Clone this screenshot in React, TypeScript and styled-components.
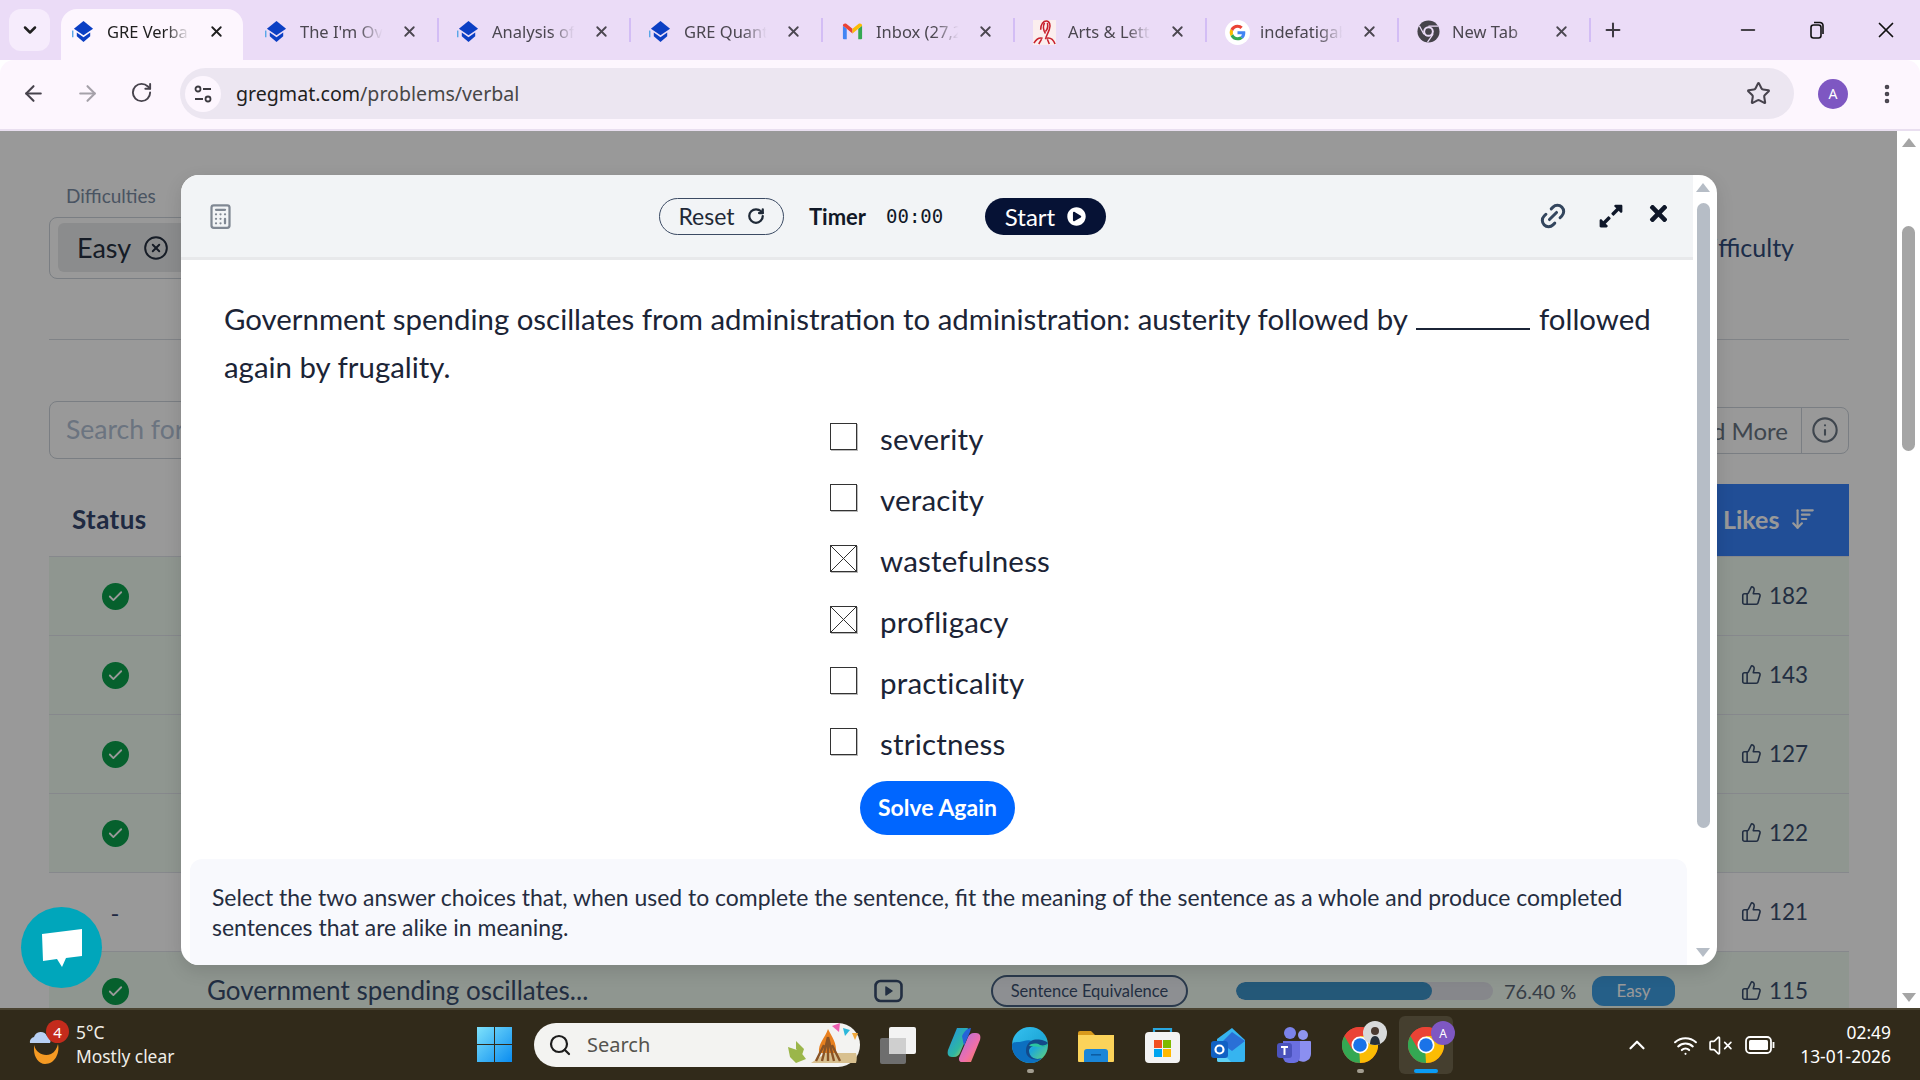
import styled, { createGlobalStyle } from 'styled-components'
import { ReactNode } from 'react'
import {
    ArrowDownWideNarrow, ArrowLeft, ArrowRight, Calculator, Check, ChevronDown, ChevronUp, CircleX, EllipsisVertical,
    Info, Link2, Minus, Plus, RotateCw, Search, Star, ThumbsUp, VolumeX, Wifi, X,
} from 'lucide-react'
import { FaExpandAlt, FaPlayCircle, FaTimes } from 'react-icons/fa'

const UI_FONT = `"Lato", "Noto Sans", sans-serif`
const CHROME_FONT = `"Noto Sans", "Open Sans", sans-serif`

const GlobalStyle = createGlobalStyle`
    html, body { margin: 0; padding: 0; height: 1080px; overflow: hidden; background: #fff; }
    * { box-sizing: border-box; }
    svg { display: block; flex-shrink: 0; }
`

const Screen = styled.div`
    width: 1920px;
    height: 1080px;
    display: flex;
    flex-direction: column;
    overflow: hidden;
    font-family: ${UI_FONT};
`

/* browser chrome */
const TabStrip = styled.div`
    height: 60px;
    flex-shrink: 0;
    background: #ebdcf7;
    display: flex;
    align-items: flex-end;
    padding-left: 9px;
    font-family: ${CHROME_FONT};
`

const TabMenu = styled.div`
    width: 41px;
    height: 42px;
    margin: 0 5px 9px 0;
    border-radius: 12px;
    background: #f6ecfc;
    color: #1f1f1f;
    display: flex;
    align-items: center;
    justify-content: center;
`

const TabItem = styled.div<{ $active?: boolean; $sep?: boolean }>`
    position: relative;
    height: 51px;
    flex-shrink: 0;
    display: flex;
    align-items: center;
    padding-bottom: 7px;
    width: ${p => (p.$active ? '182px' : '192px')};
    margin: ${p => (p.$active ? '0 4px 0 6px' : '0')};
    padding-left: ${p => (p.$active ? '11px' : '18px')};
    background: ${p => (p.$active ? '#fdf6fe' : 'transparent')};
    border-radius: ${p => (p.$active ? '16px 16px 0 0' : '0')};
    color: ${p => (p.$active ? '#1f1f1f' : '#4b4750')};

    &::after {
        content: '';
        display: ${p => (p.$sep ? 'block' : 'none')};
        position: absolute;
        right: 0;
        top: 9px;
        height: 24px;
        width: 2px;
        background: #d3bdf5;
    }
`

const TabIcon = styled.div`
    width: 23px;
    height: 23px;
    flex-shrink: 0;
`

const TabTitle = styled.div`
    width: 86px;
    margin: 0 15px 0 12px;
    font-size: 16.5px;
    white-space: nowrap;
    overflow: hidden;
    -webkit-mask-image: linear-gradient(90deg, #000 68%, transparent 96%);
    mask-image: linear-gradient(90deg, #000 68%, transparent 96%);
`

const NewTab = styled.div`
    margin: 0 0 9px 11px;
    height: 42px;
    color: #3d3a42;
    display: flex;
    align-items: center;
`

const WindowControls = styled.div`
    margin-left: auto;
    height: 60px;
    display: flex;
    align-items: center;
    color: #111;
`

const WindowButton = styled.div`
    width: 69px;
    display: flex;
    justify-content: center;
`

const ToolBar = styled.div`
    height: 71px;
    flex-shrink: 0;
    background: #fdf6fe;
    border-bottom: 2px solid #e9dff0;
    border-radius: 14px 14px 0 0;
    display: flex;
    align-items: center;
    padding-bottom: 2px;
`

const NavButton = styled.div<{ $off?: boolean }>`
    width: 54px;
    display: flex;
    justify-content: center;
    color: ${p => (p.$off ? '#a5a1a9' : '#47434d')};
`

const NavGroup = styled.div`
    width: 180px;
    padding-left: 6px;
    display: flex;
`

const AddressBar = styled.div`
    width: 1614px;
    height: 51px;
    border-radius: 26px;
    background: #ece6f1;
    display: flex;
    align-items: center;
    padding: 0 23px 0 5px;
    font-family: ${CHROME_FONT};
    font-size: 19.6px;
`

const SiteInfo = styled.div`
    width: 36px;
    height: 36px;
    border-radius: 50%;
    background: #fdf6fe;
    display: flex;
    align-items: center;
    justify-content: center;
    margin-right: 15px;
`

const Host = styled.span`
    color: #1f1f1f;
`

const UrlPath = styled.span`
    color: #474747;
`

const Bookmark = styled.div`
    margin-left: auto;
    color: #47434d;
`

const Avatar = styled.div`
    width: 30px;
    height: 30px;
    margin-left: 24px;
    border-radius: 50%;
    background: #7e57c2;
    color: #fff;
    font-size: 14px;
    font-family: ${CHROME_FONT};
    display: flex;
    align-items: center;
    justify-content: center;
`

const Kebab = styled.div`
    margin-left: 27px;
    color: #47434d;
`

/* page behind the dialog */
const Viewport = styled.div`
    height: 877px;
    flex-shrink: 0;
    position: relative;
    display: flex;
    overflow: hidden;
`

const Page = styled.div`
    width: 1897px;
    flex-shrink: 0;
    padding: 53px 48px 0 49px;
    background: #fff;
    position: relative;
`

const Overlay = styled.div`
    position: absolute;
    inset: 0 23px 0 0;
    background: rgba(0, 0, 0, 0.4);
    z-index: 1;
`

const FilterLabel = styled.div`
    margin-left: 17px;
    height: 24px;
    line-height: 24px;
    font-size: 19px;
    color: #7b8ca3;
`

const FilterRow = styled.div`
    margin-top: 9px;
    display: flex;
    align-items: center;
    justify-content: space-between;
`

const FilterBox = styled.div`
    width: 400px;
    height: 62px;
    border: 1px solid #cbd2da;
    border-radius: 8px;
    padding: 5px 8px;
`

const Chip = styled.div`
    width: 150px;
    height: 49px;
    border-radius: 6px;
    background: #e8e9eb;
    display: flex;
    align-items: center;
    gap: 12px;
    padding-left: 19px;
    font-size: 27px;
    color: #253040;
`

const SortLabel = styled.div`
    margin: 0 55px 2px 0;
    font-size: 25px;
    color: #304b7b;
`

const Divider = styled.div`
    margin-top: 60px;
    height: 1px;
    background: #d5dae2;
`

const SearchRow = styled.div`
    margin-top: 61px;
    height: 58px;
    display: flex;
    align-items: center;
    justify-content: space-between;
`

const SearchInput = styled.div`
    width: 800px;
    height: 58px;
    border: 1px solid #cbd2da;
    border-radius: 8px;
    display: flex;
    align-items: center;
    padding: 0 0 2px 16px;
    font-size: 26.5px;
    color: #b2c1d5;
`

const ReadMore = styled.div`
    width: 250px;
    height: 47px;
    border: 1px solid #cbd2da;
    border-radius: 8px;
    display: flex;
    align-items: center;
    justify-content: flex-end;
    padding-bottom: 0;
    font-size: 24px;
    color: #697583;
`

const ReadMoreInfo = styled.div`
    width: 47px;
    height: 100%;
    margin-left: 13px;
    border-left: 1px solid #cbd2da;
    display: flex;
    align-items: center;
    justify-content: center;
`

const TableHead = styled.div`
    margin-top: 25px;
    height: 72px;
    display: grid;
    grid-template-columns: 134px 660px 90px 303px 346px 103px 164px;
    align-items: stretch;
`

const HeadStatus = styled.div`
    padding: 0 0 3px 23px;
    display: flex;
    align-items: center;
    font-size: 26px;
    letter-spacing: 0.4px;
    font-weight: 700;
    color: #34466f;
`

const HeadLikes = styled.div`
    grid-column: 7;
    background: #3782fa;
    color: #fff;
    display: flex;
    align-items: center;
    gap: 11px;
    padding: 0 0 3px 38px;
    font-size: 25px;
    font-weight: 700;
`

const TableRow = styled.div<{ $solved: boolean }>`
    height: 79px;
    display: grid;
    grid-template-columns: 134px 660px 90px 303px 346px 103px 164px;
    align-items: center;
    border-top: 1px solid #dfe3ea;
    background: ${p => (p.$solved ? '#eefaf0' : '#fff')};
`

const StatusCell = styled.div`
    display: flex;
    justify-content: center;
    padding-right: 2px;
    font-size: 24px;
    color: #34466f;
`

const SolvedMark = styled.div`
    width: 27px;
    height: 27px;
    border-radius: 50%;
    background: #0aa04c;
    color: #fff;
    display: flex;
    align-items: center;
    justify-content: center;
`

const TitleCell = styled.div`
    padding: 0 0 2px 24px;
    font-size: 26px;
    color: #3a4e6e;
    white-space: nowrap;
`

const VideoCell = styled.div`
    display: flex;
    justify-content: center;
`

const TypePill = styled.div`
    margin-left: 58px;
    width: 197px;
    height: 32px;
    border-radius: 16px;
    border: 2px solid #46607f;
    background: #ebeef3;
    display: flex;
    align-items: center;
    justify-content: center;
    font-size: 16.5px;
    color: #3a4e6e;
`

const RateCell = styled.div`
    display: flex;
    align-items: center;
    gap: 11px;
    font-size: 20px;
    color: #5b6775;
    white-space: nowrap;
`

const RateTrack = styled.div`
    width: 257px;
    height: 18px;
    border-radius: 9px;
    background: #e0e1e8;
    overflow: hidden;
`

const RateFill = styled.div`
    height: 100%;
    background: #3c93c8;
    border-radius: 9px;
`

const LevelPill = styled.div`
    width: 83px;
    height: 30px;
    margin-left: 10px;
    padding-bottom: 2px;
    border-radius: 12px;
    background: #3f9ee3;
    color: #fff;
    font-size: 17px;
    display: flex;
    align-items: center;
    justify-content: center;
`

const LikesCell = styled.div`
    padding: 0 0 2px 56px;
    display: flex;
    align-items: center;
    gap: 7px;
    font-size: 22.5px;
    color: #3a4e6e;
`

const PageScroll = styled.div`
    width: 23px;
    flex-shrink: 0;
    background: #fff;
    display: flex;
    flex-direction: column;
    align-items: center;
    padding: 7px 0 6px;
`

const ScrollArrow = styled.div<{ $down?: boolean; $color: string }>`
    width: 0;
    height: 0;
    border-left: 7px solid transparent;
    border-right: 7px solid transparent;
    border-bottom: ${p => (p.$down ? '0' : `9px solid ${p.$color}`)};
    border-top: ${p => (p.$down ? `9px solid ${p.$color}` : '0')};
    margin-top: ${p => (p.$down ? 'auto' : '0')};
`

const PageThumb = styled.div`
    width: 13px;
    height: 225px;
    margin-top: 79px;
    border-radius: 7px;
    background: #a5a5a5;
`

const ChatButton = styled.div`
    position: absolute;
    left: 21px;
    top: 776px;
    width: 81px;
    height: 81px;
    border-radius: 50%;
    background: #00a6bb;
    z-index: 2;
    display: flex;
    align-items: center;
    justify-content: center;
`

/* dialog */
const Modal = styled.div`
    position: absolute;
    left: 181px;
    top: 44px;
    width: 1536px;
    height: 790px;
    border-radius: 18px;
    background: #fff;
    overflow: hidden;
    z-index: 2;
    display: flex;
    box-shadow: 0 6px 18px rgba(0, 0, 0, 0.12);
`

const ModalMain = styled.div`
    width: 1512px;
    display: flex;
    flex-direction: column;
`

const ModalHeader = styled.div`
    height: 85px;
    flex-shrink: 0;
    background: #f2f4f6;
    border-bottom: 3px solid #e8e9eb;
    display: grid;
    grid-template-columns: 478px 125px 25px 58px 19px 57px 42px 121px 418px 58px 58px 36px 1fr;
    align-items: center;
    color: #111827;
`

const CalcIcon = styled.div`
    padding-left: 26px;
    color: #808893;
`

const ResetButton = styled.div`
    height: 37px;
    border-radius: 19px;
    border: 1px solid #3b4a63;
    display: flex;
    align-items: center;
    justify-content: center;
    gap: 12px;
    font-size: 23px;
    color: #1f2937;
`

const TimerLabel = styled.div`
    font-size: 22px;
    font-weight: 700;
    color: #111827;
`

const TimerValue = styled.div`
    font-family: "DejaVu Sans Mono", monospace;
    font-size: 19px;
    color: #111827;
`

const StartButton = styled.div`
    height: 37px;
    border-radius: 19px;
    background: #061235;
    color: #fff;
    display: flex;
    align-items: center;
    justify-content: center;
    gap: 12px;
    font-size: 24px;
`

const HeaderIcon = styled.div<{ $color?: string; $lift?: number }>`
    display: flex;
    justify-content: center;
    margin-bottom: ${p => p.$lift || 0}px;
    color: ${p => p.$color || '#0f1729'};
`

const LinkIcon = styled(Link2)`
    transform: rotate(-45deg);
`

const ModalBody = styled.div`
    flex: 1;
    display: flex;
    flex-direction: column;
    padding-top: 35px;
`

const Question = styled.div`
    padding: 0 30px 0 43px;
    font-size: 29.4px;
    line-height: 47.5px;
    color: #1b2436;
`

const Blank = styled.span`
    display: inline-block;
    width: 114px;
    height: 24px;
    border-bottom: 2px solid #1b2436;
    margin: 0 9px 0 8px;
    vertical-align: baseline;
`

const Choices = styled.div`
    margin: 22px 0 0 649px;
    display: flex;
    flex-direction: column;
`

const Choice = styled.div`
    height: 61px;
    display: flex;
    align-items: flex-start;
    font-size: 29.5px;
    line-height: 54px;
    letter-spacing: 0.2px;
    color: #1b2436;
`

const CheckBox = styled.div`
    width: 27px;
    height: 27px;
    margin: 11px 23px 0 0;
    border: 1px solid #333;
    box-shadow: 1px 1px 0 #bbb;
    display: flex;
`

const SolveButton = styled.div`
    width: 155px;
    height: 54px;
    margin: 3px 0 0 679px;
    padding-bottom: 2px;
    border-radius: 27px;
    background: #0066ff;
    color: #fff;
    font-size: 23px;
    font-weight: 700;
    display: flex;
    align-items: center;
    justify-content: center;
`

const Instructions = styled.div`
    height: 106px;
    margin: auto 6px 0 9px;
    border-radius: 12px 12px 0 0;
    background: #f8f9fd;
    padding: 23px 20px 0 22px;
    font-size: 22.95px;
    line-height: 30px;
    color: #252d40;
`

const ModalScroll = styled.div`
    width: 24px;
    flex-shrink: 0;
    display: flex;
    flex-direction: column;
    align-items: center;
    padding: 8px 4px 8px 0;
`

const ModalThumb = styled.div`
    width: 13px;
    height: 625px;
    margin-top: 11px;
    border-radius: 7px;
    background: #b6bdc6;
`

/* taskbar */
const TaskBar = styled.div`
    height: 72px;
    flex-shrink: 0;
    background: #312a1a;
    border-top: 2px solid #4a4331;
    display: flex;
    align-items: center;
    color: #fff;
    font-family: ${CHROME_FONT};
`

const Weather = styled.div`
    width: 461px;
    flex-shrink: 0;
    padding-left: 29px;
    display: flex;
    align-items: center;
    gap: 13px;
`

const WeatherIcon = styled.div`
    position: relative;
    width: 34px;
    height: 44px;
`

const WeatherBadge = styled.div`
    position: absolute;
    left: 17px;
    top: -3px;
    width: 23px;
    height: 23px;
    border-radius: 50%;
    background: #c42b1c;
    font-size: 15px;
    display: flex;
    align-items: center;
    justify-content: center;
`

const WeatherText = styled.div`
    padding-bottom: 3px;
    font-size: 17.4px;
    line-height: 24px;
    color: #f0eee8;
`

const AppCell = styled.div<{ $active?: boolean }>`
    position: relative;
    width: ${p => (p.$active ? '54px' : '66px')};
    margin: ${p => (p.$active ? '0 6px' : '0')};
    height: 58px;
    padding-top: 11px;
    flex-shrink: 0;
    border-radius: 6px;
    background: ${p => (p.$active ? '#453f2f' : 'transparent')};
    display: flex;
    flex-direction: column;
    align-items: center;
    gap: 6px;
`

const RunDot = styled.div<{ $active?: boolean }>`
    width: ${p => (p.$active ? '24px' : '7px')};
    height: 4px;
    border-radius: 2px;
    background: ${p => (p.$active ? '#0a9cf5' : '#a29d90')};
`

const SearchPill = styled.div`
    width: 326px;
    height: 44px;
    margin: 0 5px 0 7px;
    border-radius: 22px;
    background: #f3f3f1;
    color: #55534e;
    display: flex;
    align-items: center;
    padding: 0 2px 0 14px;
    font-size: 20px;
    flex-shrink: 0;
`

const SearchPillText = styled.div`
    margin: 0 0 2px 15px;
`

const SearchArt = styled.div`
    margin-left: auto;
`

const Tray = styled.div`
    margin-left: auto;
    display: flex;
    align-items: center;
    padding-right: 29px;
`

const TrayIcon = styled.div<{ $w: number }>`
    width: ${p => p.$w}px;
    display: flex;
    justify-content: center;
`

const Clock = styled.div`
    margin-left: 15px;
    padding-bottom: 3px;
    text-align: right;
    font-size: 17.4px;
    line-height: 24px;
`

const AvatarBadge = styled.div`
    position: absolute;
    left: 32px;
    top: 5px;
    width: 24px;
    height: 24px;
    border-radius: 50%;
    background: #7e57c2;
    font-size: 12px;
    display: flex;
    align-items: center;
    justify-content: center;
`

const PhotoBadge = styled(AvatarBadge)`
    left: 36px;
    background: #d8dadb;
    overflow: hidden;
`

/* drawings */
const GregIcon = () => (
    <svg width="23" height="23" viewBox="0 0 24 24">
        <polygon points="12,1 22,9 12,16 2,9" fill="#0b3fc4" />
        <polygon points="5,13 12,18 19,13 19,17 12,23 5,17" fill="#0b3fc4" />
        <rect x="0" y="11" width="1.5" height="7" fill="#5aa7e8" />
    </svg>
)

const GmailIcon = () => (
    <svg width="23" height="23" viewBox="0 0 24 24">
        <path d="M2 20V6l4 3v11H3a1 1 0 0 1-1-1z" fill="#4285f4" />
        <path d="M22 20V6l-4 3v11h3a1 1 0 0 0 1-1z" fill="#34a853" />
        <path d="M6 9 2 6c0-2 2-3 3.500-2L12 9v5z" fill="#ea4335" />
        <path d="M18 9l4-3c0-2-2-3-3.500-2L12 9v5z" fill="#fbbc04" />
    </svg>
)

const ArtsIcon = () => (
    <svg width="23" height="25" viewBox="0 0 24 26" fill="none" stroke="#c8202c" strokeWidth="1.6">
        <rect width="24" height="26" fill="#fbeeee" stroke="none" />
        <path d="M8 10c0-6 3-9 6-9s5 4 3 9-3 6-4 10M12 3c-2 4-1 8 1 11M15 3c1 4 0 7-2 9" />
        <path d="M1 24c3-5 6-6 9-5M23 25c-2-5-5-7-9-6M6 25l3-5M17 25l-2-5" />
    </svg>
)

const GoogleIcon = () => (
    <svg width="25" height="25" viewBox="0 0 48 48">
        <circle cx="24" cy="24" r="24" fill="#fff" />
        <path fill="#4285f4" d="M39 24.500c0-1.100-.1-2.100-.3-3H24v6h8.500c-.4 2-1.500 3.600-3.100 4.700l4.900 3.800C37.200 33.300 39 29.300 39 24.500z" />
        <path fill="#34a853" d="M24 39c4 0 7.500-1.300 10-3.700l-4.900-3.800c-1.300.9-3 1.400-5.100 1.400-3.900 0-7.200-2.600-8.400-6.200l-5 3.900C13 35.600 18 39 24 39z" />
        <path fill="#fbbc04" d="M15.600 26.700c-.3-.9-.5-1.800-.5-2.700s.2-1.900.5-2.700l-5-3.900C9.600 19.400 9 21.600 9 24s.6 4.600 1.600 6.600z" />
        <path fill="#ea4335" d="M24 15c2.200 0 4.200.8 5.700 2.200l4.300-4.300C31.500 10.500 28 9 24 9c-6 0-11 3.400-13.400 8.400l5 3.900c1.200-3.600 4.500-6.300 8.400-6.300z" />
    </svg>
)

const NewTabIcon = () => (
    <svg width="23" height="23" viewBox="0 0 24 24">
        <circle cx="12" cy="12" r="11.500" fill="#45434a" />
        <circle cx="12" cy="12" r="5.500" fill="#ebdcf7" />
        <circle cx="12" cy="12" r="3.500" fill="#45434a" />
        <path d="M12 6.500h10M7.200 14.800 2.500 6M16.800 14.800 11 23" stroke="#ebdcf7" strokeWidth="1.300" />
    </svg>
)

const SiteInfoIcon = () => (
    <svg width="20" height="20" viewBox="0 0 20 20" fill="none" stroke="#3c3a40" strokeWidth="1.800">
        <circle cx="5" cy="5" r="2.500" />
        <path d="M10 5h8M2 15h8" />
        <circle cx="15" cy="15" r="2.500" />
    </svg>
)

const RestoreIcon = () => (
    <svg width="16" height="18" viewBox="0 0 16 18" fill="none" stroke="#111" strokeWidth="1.600">
        <rect x="2" y="4" width="10" height="13" rx="2.500" />
        <path d="M5 1.500h6a3 3 0 0 1 3 3V13" />
    </svg>
)

const VideoIcon = () => (
    <svg width="29" height="24" viewBox="0 0 29 24" fill="none" stroke="#3a4e6e" strokeWidth="2.600">
        <rect x="1.500" y="2" width="26" height="20" rx="5" />
        <path d="M12 8v8l6-4z" fill="#3a4e6e" strokeWidth="1.500" strokeLinejoin="round" />
    </svg>
)

const ChatIcon = () => (
    <svg width="42" height="40" viewBox="0 0 42 40">
        <path d="M1 6 41 1v27l-16 2-4 9-5-8-14 2z" fill="#fff" />
    </svg>
)

const CloudMoonIcon = () => (
    <svg width="34" height="44" viewBox="0 0 34 44">
        <path d="M5 22c2 8 10 12 17 9 4-2 6-6 7-10 2 9-3 20-13 20C10 41 5 34 5 27z" fill="#f59a23" />
        <path d="M1 20a5 5 0 0 1 4-6 7 7 0 0 1 13-1 5 5 0 0 1 3 7z" fill="#b8d0f4" />
    </svg>
)

const WindowsLogo = () => (
    <svg width="35" height="35" viewBox="0 0 35 35">
        <defs>
            <linearGradient id="winLogo" x1="0" y1="0" x2="1" y2="1">
                <stop offset="0" stopColor="#7ee2fb" />
                <stop offset="1" stopColor="#0a8cf0" />
            </linearGradient>
        </defs>
        <path d="M0 0h17v17H0zM18 0h17v17H18zM0 18h17v17H0zM18 18h17v17H18z" fill="url(#winLogo)" />
    </svg>
)

const BonfireArt = () => (
    <svg width="72" height="44" viewBox="0 0 72 44">
        <path d="M25 40h45c1-3 1-7 0-10H40z" fill="#d8c08f" />
        <path d="M42 6c4 8 9 14 8 24H33c-1-10 6-15 9-24z" fill="#e8801f" />
        <path d="M42 14 36 38M42 14 42 38M42 14 48 38M38 22 30 38M46 22 54 38" stroke="#8a5426" strokeWidth="2.400" />
        <path d="M2 24l12 4 6 8-10 4-6-6zM10 18l8 8-2 6-6-6z" fill="#9bb64a" />
        <path d="M46 3l8-3-1 9z" fill="#ef5fb0" />
        <path d="M57 5l7 2-5 6z" fill="#2bb7da" />
        <path d="M66 10l6 0-3 7z" fill="#f3a93b" />
    </svg>
)

const TaskViewIcon = () => (
    <svg width="36" height="37" viewBox="0 0 36 37">
        <rect x="0" y="11" width="26" height="26" rx="2" fill="#6e6e6e" />
        <rect x="9" y="0" width="27" height="27" rx="2" fill="#f3f3f3" />
        <rect x="9" y="11" width="17" height="16" fill="#cfcfcf" />
    </svg>
)

const CopilotIcon = () => (
    <svg width="34" height="36" viewBox="0 0 34 36">
        <defs>
            <linearGradient id="copA" x1="0" y1="0" x2="1" y2="1">
                <stop offset="0" stopColor="#1f8fe9" />
                <stop offset="0.6" stopColor="#2fb7a0" />
                <stop offset="1" stopColor="#e8d23a" />
            </linearGradient>
            <linearGradient id="copB" x1="0" y1="0" x2="1" y2="1">
                <stop offset="0" stopColor="#a86ee8" />
                <stop offset="0.6" stopColor="#f06fa8" />
                <stop offset="1" stopColor="#f7843b" />
            </linearGradient>
        </defs>
        <path d="M10 1h9c3 0 3 2 3 4l-9 21c-1 2-3 4-6 4H5c-4 0-5-3-4-7z" fill="url(#copA)" />
        <path d="M24 35h-9c-3 0-3-2-3-4l9-21c1-2 3-4 6-4h2c4 0 5 3 4 7z" fill="url(#copB)" />
        <path d="M15 9c2-4 5-8 9-8l-1 4-6 14z" fill="#2563d8" />
    </svg>
)

const EdgeIcon = () => (
    <svg width="36" height="36" viewBox="0 0 36 36">
        <defs>
            <linearGradient id="edgeA" x1="0" y1="0" x2="1" y2="1">
                <stop offset="0" stopColor="#35c1f1" />
                <stop offset="0.6" stopColor="#1fa8d8" />
                <stop offset="1" stopColor="#6fdc68" />
            </linearGradient>
        </defs>
        <circle cx="18" cy="18" r="18" fill="url(#edgeA)" />
        <path d="M0 18C0 28 8 36 18 36c6 0 9-2 12-5-8 3-13-2-13-7 0-3 3-6 8-5-2-5-8-7-13-5-6 2-12 0-12 4z" fill="#0c6fc0" />
        <path d="M14 24c0 6 6 10 14 8l2-1c-8 3-13-2-13-7 0-4 4-6 9-5 5 1 10 0 10-3-3-3-12-5-17-2-3 2-5 5-5 10z" fill="#134a8a" />
        <path d="M17 19c2-3 8-3 11-1 3 1 7 0 8-2 0 3-4 4-8 4-4 0-8-1-11-1z" fill="#2bc4a0" />
    </svg>
)

const FolderIcon = () => (
    <svg width="36" height="36" viewBox="0 0 36 36">
        <path d="M0 6a2 2 0 0 1 2-2h11l4 4h17a2 2 0 0 1 2 2v2H0z" fill="#d89a1c" />
        <path d="M0 8h36v26a1 1 0 0 1-1 1H1a1 1 0 0 1-1-1z" fill="#fbd35a" />
        <path d="M6 25a3 3 0 0 1 3-3h18a3 3 0 0 1 3 3v10H6z" fill="#1a86d8" />
        <rect x="13" y="27" width="10" height="1.600" fill="#0c5da3" />
    </svg>
)

const StoreIcon = () => (
    <svg width="35" height="36" viewBox="0 0 35 36">
        <path d="M9 7V2h17v5" fill="none" stroke="#29a7e0" strokeWidth="2.200" />
        <rect x="0" y="5" width="35" height="31" rx="4" fill="#f3f3f3" />
        <rect x="9" y="13" width="8" height="8" fill="#f25022" />
        <rect x="18" y="13" width="8" height="8" fill="#7fba00" />
        <rect x="9" y="22" width="8" height="8" fill="#00a4ef" />
        <rect x="18" y="22" width="8" height="8" fill="#ffb900" />
    </svg>
)

const OutlookIcon = () => (
    <svg width="35" height="36" viewBox="0 0 35 36">
        <path d="M6 12 21 1l13 12v20a2 2 0 0 1-2 2H8a2 2 0 0 1-2-2z" fill="#36b4f0" />
        <path d="M10 16 21 5l13 9-13 10z" fill="#2a6fd6" />
        <path d="M6 20l14 15H8a2 2 0 0 1-2-2z" fill="#5fd2f5" />
        <rect x="0" y="14" width="17" height="17" rx="3" fill="#1061c4" />
        <circle cx="8.500" cy="22.500" r="4" fill="none" stroke="#fff" strokeWidth="2.200" />
    </svg>
)

const TeamsIcon = () => (
    <svg width="34" height="36" viewBox="0 0 34 36">
        <circle cx="13" cy="6" r="6" fill="#7b83eb" />
        <circle cx="26" cy="8" r="5" fill="#8f95ee" />
        <path d="M18 14h15a1 1 0 0 1 1 1v12a8 8 0 0 1-14 5z" fill="#8b8ff0" />
        <path d="M6 14h17v16a6 6 0 0 1-6 6h-5a6 6 0 0 1-6-6z" fill="#6a6fe0" />
        <rect x="0" y="16" width="15" height="15" rx="3" fill="#4b53bc" />
        <path d="M4 20h7M7.500 20v8" stroke="#fff" strokeWidth="2" />
    </svg>
)

const ChromeIcon = () => (
    <svg width="36" height="36" viewBox="0 0 36 36">
        <circle cx="18" cy="18" r="18" fill="#ea4335" />
        <path d="M18 18 2.400 9A18 18 0 0 0 18 36l9-15.600z" fill="#34a853" />
        <path d="M18 36a18 18 0 0 0 15.600-27H18l-1 10z" fill="#fbbc04" />
        <path d="M18 9h15.600A18 18 0 0 0 2.400 9l7.800 13.500z" fill="#ea4335" />
        <circle cx="18" cy="18" r="8.500" fill="#fff" />
        <circle cx="18" cy="18" r="6.800" fill="#1a73e8" />
    </svg>
)

const PhotoIcon = () => (
    <svg width="24" height="24" viewBox="0 0 24 24">
        <path d="M7 24c0-6 2-9 5-9s5 3 5 9z" fill="#26303a" />
        <circle cx="12" cy="10" r="4" fill="#4a3a30" />
    </svg>
)

const BatteryIcon = () => (
    <svg width="30" height="20" viewBox="0 0 30 20" fill="none" stroke="#fff" strokeWidth="1.800">
        <rect x="1" y="2" width="25" height="16" rx="4" />
        <rect x="4" y="5" width="19" height="10" rx="1.500" fill="#fff" stroke="none" />
        <path d="M28.500 7v6" />
    </svg>
)

const CrossMark = () => (
    <svg width="25" height="25" viewBox="0 0 25 25" stroke="#333" strokeWidth="1">
        <path d="M0 0 25 25M25 0 0 25" />
    </svg>
)

type TabData = { title: string; icon: ReactNode; active?: boolean; sep?: boolean }

const tabs: TabData[] = [
    { title: 'GRE Verbal', icon: <GregIcon />, active: true },
    { title: "The I'm Overwhelmed", icon: <GregIcon />, sep: true },
    { title: 'Analysis of', icon: <GregIcon />, sep: true },
    { title: 'GRE Quant', icon: <GregIcon />, sep: true },
    { title: 'Inbox (27,214)', icon: <GmailIcon />, sep: true },
    { title: 'Arts & Letters', icon: <ArtsIcon />, sep: true },
    { title: 'indefatigable', icon: <GoogleIcon />, sep: true },
    { title: 'New Tab', icon: <NewTabIcon />, sep: true },
]

const problems = [
    { likes: 182, solved: true },
    { likes: 143, solved: true },
    { likes: 127, solved: true },
    { likes: 122, solved: true },
    { likes: 121, solved: false },
    { likes: 115, solved: true, title: 'Government spending oscillates...', rate: 76.4 },
]

const choices = [
    { label: 'severity', picked: false },
    { label: 'veracity', picked: false },
    { label: 'wastefulness', picked: true },
    { label: 'profligacy', picked: true },
    { label: 'practicality', picked: false },
    { label: 'strictness', picked: false },
]

const App = () => {
    return (
        <Screen>
            <GlobalStyle />

            <TabStrip>
                <TabMenu><ChevronDown size={20} strokeWidth={3} /></TabMenu>
                {tabs.map(tab => (
                    <TabItem key={tab.title} $active={tab.active} $sep={tab.sep}>
                        <TabIcon>{tab.icon}</TabIcon>
                        <TabTitle>{tab.title}</TabTitle>
                        <X size={17} strokeWidth={2.6} />
                    </TabItem>
                ))}
                <NewTab><Plus size={22} strokeWidth={2.2} /></NewTab>
                <WindowControls>
                    <WindowButton><Minus size={22} strokeWidth={1.8} /></WindowButton>
                    <WindowButton><RestoreIcon /></WindowButton>
                    <WindowButton><X size={26} strokeWidth={1.6} /></WindowButton>
                </WindowControls>
            </TabStrip>

            <ToolBar>
                <NavGroup>
                    <NavButton><ArrowLeft size={25} /></NavButton>
                    <NavButton $off><ArrowRight size={25} /></NavButton>
                    <NavButton><RotateCw size={23} /></NavButton>
                </NavGroup>
                <AddressBar>
                    <SiteInfo><SiteInfoIcon /></SiteInfo>
                    <Host>gregmat.com</Host>
                    <UrlPath>/problems/verbal</UrlPath>
                    <Bookmark><Star size={25} strokeWidth={2} /></Bookmark>
                </AddressBar>
                <Avatar>A</Avatar>
                <Kebab><EllipsisVertical size={24} strokeWidth={2.6} /></Kebab>
            </ToolBar>

            <Viewport>
                <Page>
                    <FilterLabel>Difficulties</FilterLabel>
                    <FilterRow>
                        <FilterBox>
                            <Chip>Easy <CircleX size={26} strokeWidth={1.8} /></Chip>
                        </FilterBox>
                        <SortLabel>Difficulty</SortLabel>
                    </FilterRow>
                    <Divider />
                    <SearchRow>
                        <SearchInput>Search for</SearchInput>
                        <ReadMore>
                            Read More
                            <ReadMoreInfo><Info size={28} strokeWidth={1.8} /></ReadMoreInfo>
                        </ReadMore>
                    </SearchRow>
                    <TableHead>
                        <HeadStatus>Status</HeadStatus>
                        <HeadLikes>Likes <ArrowDownWideNarrow size={26} strokeWidth={2} /></HeadLikes>
                    </TableHead>
                    {problems.map(problem => (
                        <TableRow key={problem.likes} $solved={problem.solved}>
                            <StatusCell>
                                {problem.solved ? <SolvedMark><Check size={17} strokeWidth={2.6} /></SolvedMark> : '-'}
                            </StatusCell>
                            <TitleCell>{problem.title}</TitleCell>
                            <VideoCell>{problem.title && <VideoIcon />}</VideoCell>
                            <div>{problem.title && <TypePill>Sentence Equivalence</TypePill>}</div>
                            <div>
                                {problem.rate && (
                                    <RateCell>
                                        <RateTrack><RateFill style={{ width: `${problem.rate}%` }} /></RateTrack>
                                        {problem.rate.toFixed(2)} %
                                    </RateCell>
                                )}
                            </div>
                            <div>{problem.title && <LevelPill>Easy</LevelPill>}</div>
                            <LikesCell><ThumbsUp size={21} strokeWidth={1.8} />{problem.likes}</LikesCell>
                        </TableRow>
                    ))}
                </Page>

                <PageScroll>
                    <ScrollArrow $color="#a5a5a5" />
                    <PageThumb />
                    <ScrollArrow $down $color="#a5a5a5" />
                </PageScroll>

                <Overlay />

                <ChatButton><ChatIcon /></ChatButton>

                <Modal>
                    <ModalMain>
                        <ModalHeader>
                            <CalcIcon><Calculator size={27} strokeWidth={2} /></CalcIcon>
                            <ResetButton>Reset <RotateCw size={18} strokeWidth={3} /></ResetButton>
                            <span />
                            <TimerLabel>Timer</TimerLabel>
                            <span />
                            <TimerValue>00:00</TimerValue>
                            <span />
                            <StartButton>Start <FaPlayCircle size={19} /></StartButton>
                            <span />
                            <HeaderIcon $color="#34465e"><LinkIcon size={30} strokeWidth={2.4} /></HeaderIcon>
                            <HeaderIcon><FaExpandAlt size={26} /></HeaderIcon>
                            <HeaderIcon $lift={6}><FaTimes size={25} /></HeaderIcon>
                        </ModalHeader>
                        <ModalBody>
                            <Question>
                                Government spending oscillates from administration to administration: austerity followed by<Blank />followed again by frugality.
                            </Question>
                            <Choices>
                                {choices.map(choice => (
                                    <Choice key={choice.label}>
                                        <CheckBox>{choice.picked && <CrossMark />}</CheckBox>
                                        {choice.label}
                                    </Choice>
                                ))}
                            </Choices>
                            <SolveButton>Solve Again</SolveButton>
                            <Instructions>
                                Select the two answer choices that, when used to complete the sentence, fit the meaning of the sentence as a whole and produce completed sentences that are alike in meaning.
                            </Instructions>
                        </ModalBody>
                    </ModalMain>
                    <ModalScroll>
                        <ScrollArrow $color="#b6bdc6" />
                        <ModalThumb />
                        <ScrollArrow $down $color="#b6bdc6" />
                    </ModalScroll>
                </Modal>
            </Viewport>

            <TaskBar>
                <Weather>
                    <WeatherIcon>
                        <CloudMoonIcon />
                        <WeatherBadge>4</WeatherBadge>
                    </WeatherIcon>
                    <WeatherText>5°C<br />Mostly clear</WeatherText>
                </Weather>
                <AppCell><WindowsLogo /></AppCell>
                <SearchPill>
                    <Search size={24} strokeWidth={2.2} color="#1c1c1c" />
                    <SearchPillText>Search</SearchPillText>
                    <SearchArt><BonfireArt /></SearchArt>
                </SearchPill>
                <AppCell><TaskViewIcon /></AppCell>
                <AppCell><CopilotIcon /></AppCell>
                <AppCell><EdgeIcon /><RunDot /></AppCell>
                <AppCell><FolderIcon /></AppCell>
                <AppCell><StoreIcon /></AppCell>
                <AppCell><OutlookIcon /></AppCell>
                <AppCell><TeamsIcon /></AppCell>
                <AppCell>
                    <ChromeIcon /><RunDot />
                    <PhotoBadge><PhotoIcon /></PhotoBadge>
                </AppCell>
                <AppCell $active>
                    <ChromeIcon /><RunDot $active />
                    <AvatarBadge>A</AvatarBadge>
                </AppCell>
                <Tray>
                    <TrayIcon $w={56}><ChevronUp size={26} strokeWidth={2} /></TrayIcon>
                    <TrayIcon $w={40}><Wifi size={25} strokeWidth={2} /></TrayIcon>
                    <TrayIcon $w={30}><VolumeX size={25} strokeWidth={1.6} /></TrayIcon>
                    <TrayIcon $w={50}><BatteryIcon /></TrayIcon>
                    <Clock>02:49<br />13-01-2026</Clock>
                </Tray>
            </TaskBar>
        </Screen>
    )
}

export default App
